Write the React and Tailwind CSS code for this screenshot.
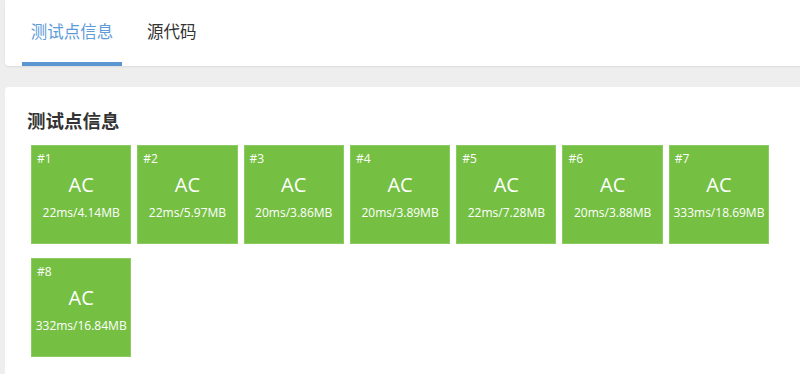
import React from 'react'

const cases = [
  {id: 1, time: '22ms', mem: '4.14MB'},
  {id: 2, time: '22ms', mem: '5.97MB'},
  {id: 3, time: '20ms', mem: '3.86MB'},
  {id: 4, time: '20ms', mem: '3.89MB'},
  {id: 5, time: '22ms', mem: '7.28MB'},
  {id: 6, time: '20ms', mem: '3.88MB'},
  {id: 7, time: '333ms', mem: '18.69MB'},
  {id: 8, time: '332ms', mem: '16.84MB'},
]

function CaseBox({c}) {
  return (
    <div className="w-[100.3px] h-[99px] bg-[#75bf43] border border-[#8ccb62] text-white flex flex-col">
      <div className="pl-[5px] pt-[5px] text-[12px] leading-[16px] font-medium">#{c.id}</div>
      <div className="text-center text-[20px] leading-[26px] mt-[5px]">AC</div>
      <div className="text-center text-[12px] leading-[16px] mt-[7px]">{c.time}/{c.mem}</div>
    </div>
  )
}

export default function App() {
  return (
    <div
      className="w-[800px] h-[374px] overflow-hidden bg-[#eeeeee]"
      style={{fontFamily: '"Open Sans", "Noto Sans CJK SC", sans-serif'}}
    >
      <div className="ml-[5px] w-[810px] h-[66px] bg-white rounded-b-[4px] shadow-[0_1px_2px_rgba(0,0,0,0.08)] flex items-stretch">
        <div className="ml-[17px] w-[100px] relative flex items-center justify-center pb-[1px]">
          <span className="text-[16.5px] text-[#5e9bd8]">测试点信息</span>
          <div className="absolute left-0 right-0 bottom-0 h-[4px] bg-[#5b95d2]"></div>
        </div>
        <div className="ml-[17px] px-2 flex items-center pb-[1px]">
          <span className="text-[16.5px] text-[#333333]">源代码</span>
        </div>
      </div>

      <div className="mt-[21px] ml-[5px] w-[810px] h-[300px] bg-white rounded-t-[4px] pt-[21px]">
        <h2 className="pl-[22px] text-[18.5px] leading-[26px] font-bold text-[#333333]">测试点信息</h2>
        <div className="mt-[11px] pl-[26px] w-[780px] flex flex-wrap gap-x-[6px] gap-y-[14px]">
          {cases.map(c => (
            <CaseBox key={c.id} c={c} />
          ))}
        </div>
      </div>
    </div>
  )
}
